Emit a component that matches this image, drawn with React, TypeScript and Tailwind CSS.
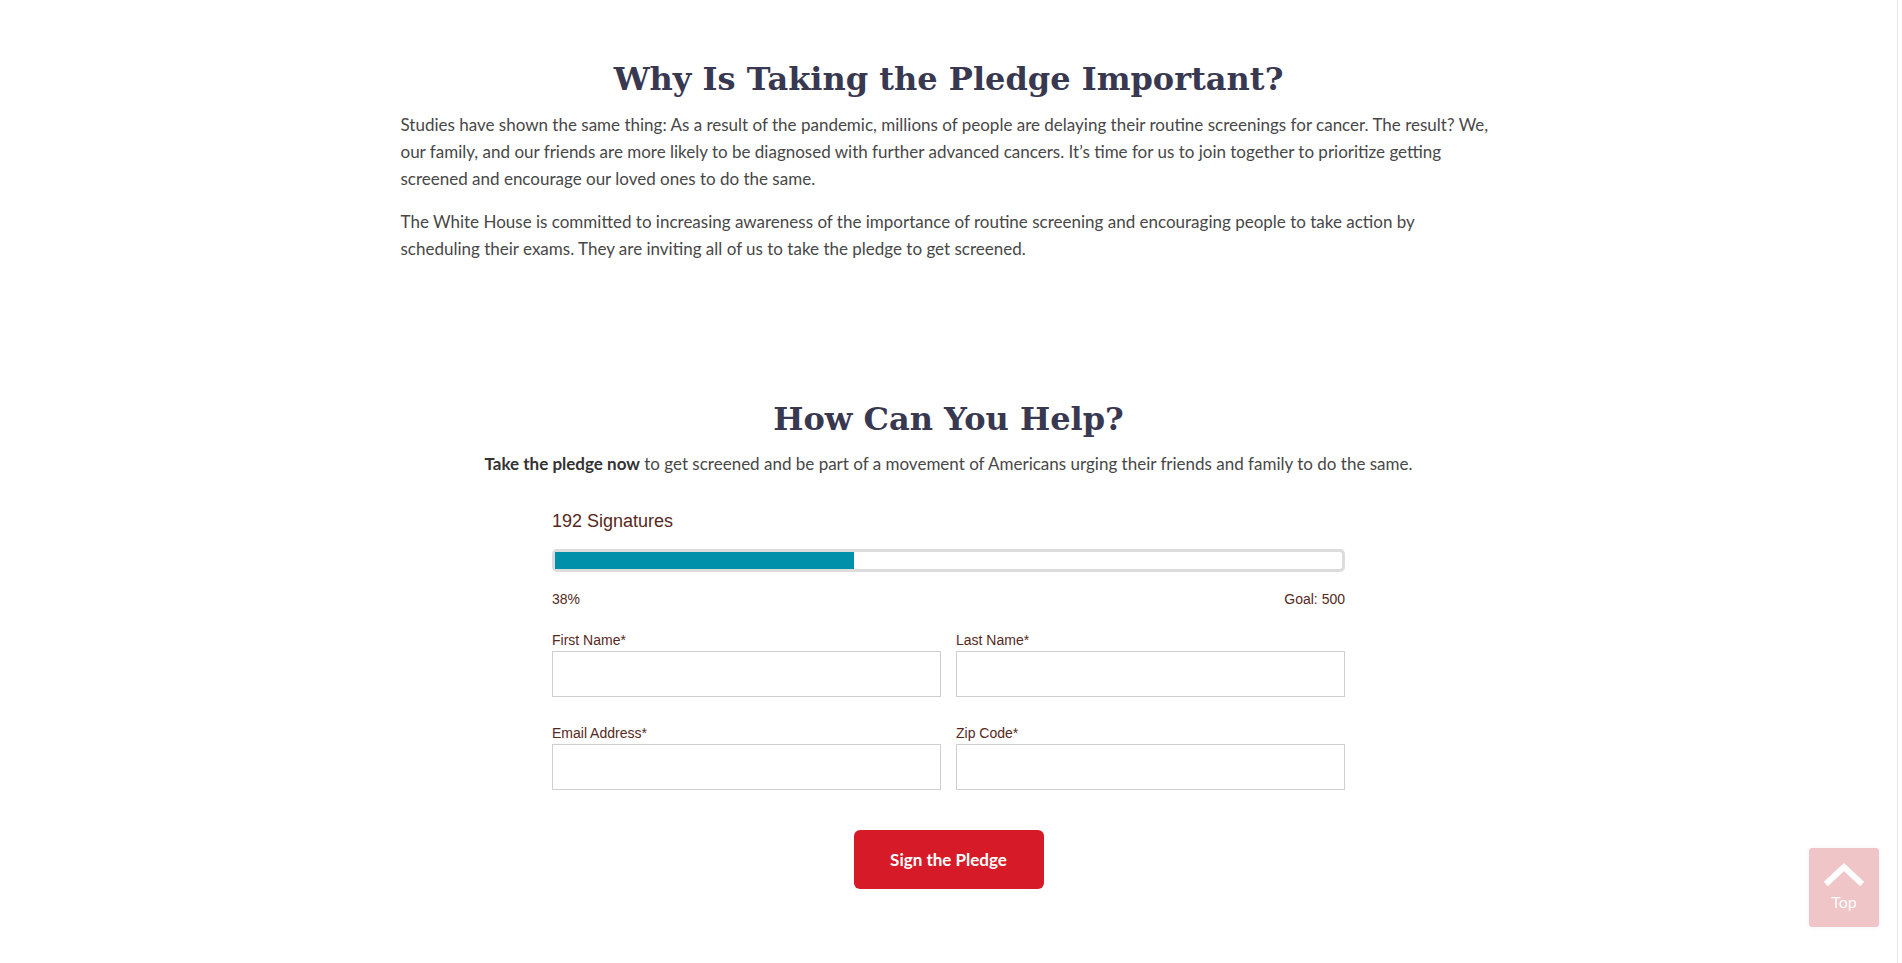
import React from "react";

function Field({ label }: { label: string }) {
  return (
    <div className="flex flex-col">
      <label className="text-[14px] leading-[16px] text-[#55291c] mb-[3px]" style={{ fontFamily: '"Liberation Sans", Arial, sans-serif' }}>
        {label}
      </label>
      <input className="h-[46px] w-full border border-[#cfcfcf] bg-white outline-none" />
    </div>
  );
}

export default function App() {
  const pct = 38;
  return (
    <div className="relative flex min-h-[963px] w-full bg-white">
      <main className="w-[1897px] shrink-0 font-['Lato',sans-serif]">
        <section className="mx-auto w-[1096px] pt-[57px]">
          <h1 className="text-center text-[32px] font-bold leading-[44px] text-[#383851] [font-family:'DejaVu_Serif',serif]">
            Why Is Taking the Pledge Important?
          </h1>
          <div className="mt-[10px] text-[17px] leading-[27px] text-[#474747]">
            <p>
              Studies have shown the same thing: As a result of the pandemic, millions of people are delaying their routine screenings for cancer. The result? We, our family, and our friends are more likely to be diagnosed with further advanced cancers. It’s time for us to join together to prioritize getting screened and encourage our loved ones to do the same.
            </p>
            <p className="mt-[16px]">
              The White House is committed to increasing awareness of the importance of routine screening and encouraging people to take action by scheduling their exams. They are inviting all of us to take the pledge to get screened.
            </p>
          </div>
        </section>

        <section className="mx-auto mt-[135px] w-[1096px]">
          <h2 className="text-center text-[32px] font-bold leading-[44px] text-[#383851] [font-family:'DejaVu_Serif',serif]">
            How Can You Help?
          </h2>
          <p className="mt-[9px] text-center text-[17px] leading-[27px] text-[#474747]">
            <strong className="font-bold text-[#333]">Take the pledge now</strong> to get screened and be part of a movement of Americans urging their friends and family to do the same.
          </p>
        </section>

        <section className="mx-auto mt-[34px] w-[793px]" style={{ fontFamily: '"Liberation Sans", Arial, sans-serif' }}>
          <div className="text-[18px] leading-[20px] text-[#55291c]">192 Signatures</div>
          <div className="mt-[18px] h-[23px] rounded-[5px] border-[3px] border-[#dcdcdc] bg-white">
            <div className="h-full bg-[#0090a9]" style={{ width: `${pct}%` }} />
          </div>
          <div className="mt-[19px] flex justify-between text-[14px] leading-[16px] text-[#55291c]">
            <span>38%</span>
            <span>Goal: 500</span>
          </div>
          <div className="mt-[25px] grid grid-cols-2 gap-x-[15px] gap-y-[28px]">
            <Field label="First Name*" />
            <Field label="Last Name*" />
            <Field label="Email Address*" />
            <Field label="Zip Code*" />
          </div>
          <div className="mt-[40px] flex justify-center pb-[74px]">
            <button className="h-[59px] w-[190px] rounded-[6px] bg-[#d71a27] text-[17px] font-bold text-white font-['Lato',sans-serif]">
              Sign the Pledge
            </button>
          </div>
        </section>
      </main>
      <div className="w-px shrink-0 bg-[#e6e6e6]" />
      <div className="flex-1 bg-white" />

      <button className="fixed bottom-[36px] right-[23px] flex h-[79px] w-[70px] flex-col items-center rounded-[3px] bg-[#f0c5c8] shadow-[0_0_6px_rgba(0,0,0,0.04)]">
        <svg width="40" height="24" viewBox="0 0 40 24" className="mt-[14px]">
          <path d="M4 20 L20 5 L36 20" fill="none" stroke="white" strokeWidth="6" strokeLinecap="square" />
        </svg>
        <span className="mt-[6px] text-[16px] leading-[20px] text-white font-['Lato',sans-serif]">Top</span>
      </button>
    </div>
  );
}
